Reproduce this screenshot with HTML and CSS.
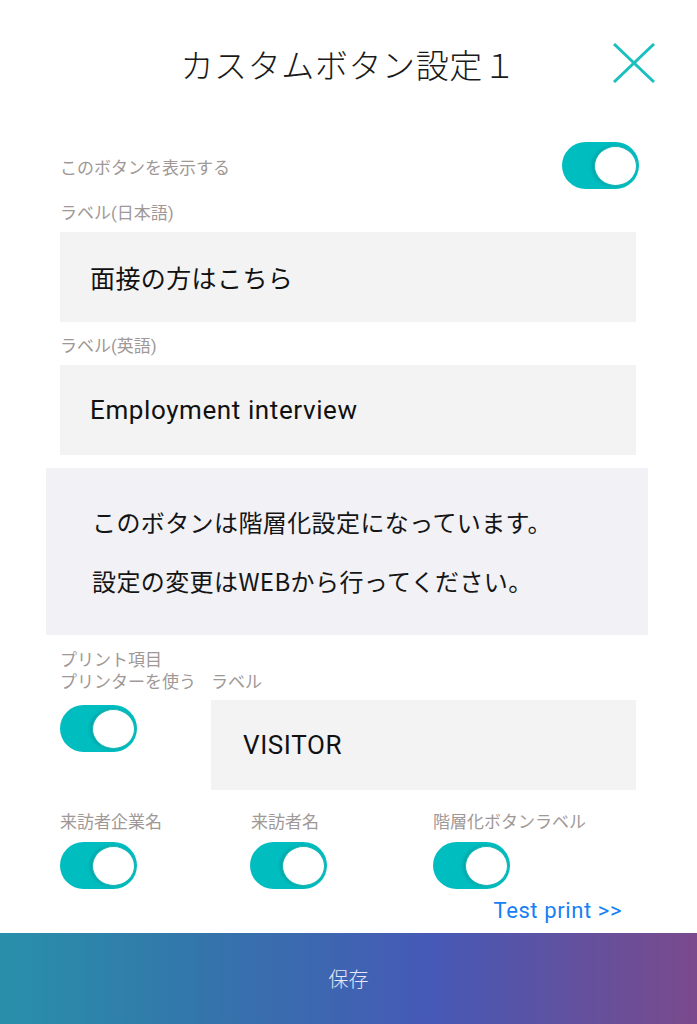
FILE: index.html
```html
<html><head><title>カスタムボタン設定1</title>
<meta charset="utf-8">
<link rel="stylesheet" href="styles.css">
</head>
<body>

<div class="page">
  <header class="top-bar">
    <span></span>
    <h1 class="title">カスタムボタン設定１</h1>
    <button class="close-btn" aria-label="閉じる">
      <svg viewBox="0 0 42 40" width="42" height="40">
        <line x1="1" y1="1" x2="41" y2="39" stroke="#1cbfbe" stroke-width="3"/>
        <line x1="41" y1="1" x2="1" y2="39" stroke="#1cbfbe" stroke-width="3"/>
      </svg>
    </button>
  </header>

  <main class="content">
    <div class="show-row">
      <span class="field-label">このボタンを表示する</span>
      <span class="toggle"><span class="knob"></span></span>
    </div>

    <div class="field-label label-gap">ラベル(日本語)</div>
    <div class="text-box jp-text">面接の方はこちら</div>

    <div class="field-label label-gap">ラベル(英語)</div>
    <div class="text-box">Employment interview</div>

    <div class="notice">
      <p>このボタンは階層化設定になっています。</p>
      <p>設定の変更はWEBから行ってください。</p>
    </div>

    <div class="print-row">
      <div class="print-left">
        <div class="field-label">プリント項目</div>
        <div class="field-label">プリンターを使う</div>
        <span class="toggle print-toggle"><span class="knob"></span></span>
      </div>
      <div class="print-right">
        <div class="field-label">ラベル</div>
        <div class="text-box small-box">VISITOR</div>
      </div>
    </div>

    <div class="item-grid">
      <div class="item">
        <div class="field-label">来訪者企業名</div>
        <span class="toggle"><span class="knob"></span></span>
      </div>
      <div class="item">
        <div class="field-label">来訪者名</div>
        <span class="toggle"><span class="knob"></span></span>
      </div>
      <div class="item">
        <div class="field-label">階層化ボタンラベル</div>
        <span class="toggle"><span class="knob"></span></span>
      </div>
    </div>

    <div class="test-row">
      <a class="test-link" href="#">Test print &gt;&gt;</a>
    </div>
  </main>

  <footer class="save-bar">保存</footer>
</div>

</body></html>
```

FILE: styles.css
```css
:root {
  --teal: #00bdbf;
  --label: #a09896;
  --box: #f3f3f3;
  --notice: #f1f1f6;
  --link: #1680f6;
}

body {
  margin: 0;
  padding: 0;
  background: #fff;
  color: #111;
  font-family: Roboto, "Noto Sans CJK JP", sans-serif;
}

.page {
  display: flex;
  flex-direction: column;
  min-height: 100vh;
}

.top-bar {
  height: 132px;
  display: grid;
  grid-template-columns: 1fr auto 1fr;
  align-items: center;
}

.title {
  margin: -4px 0 0 0;
  font-family: "Noto Sans CJK JP", sans-serif;
  font-size: 33px;
  font-weight: 300;
  color: #1a1a1a;
  letter-spacing: 0.6px;
}

.close-btn {
  justify-self: end;
  margin-right: 42px;
  margin-top: -6px;
  padding: 0;
  border: none;
  background: none;
  display: flex;
}

.content {
  padding: 10px 61px 0 60px;
}

.field-label {
  font-family: Roboto, "Noto Sans CJK JP", sans-serif;
  font-size: 17px;
  line-height: 22px;
  color: var(--label);
}

.label-gap {
  margin-top: 13px;
}

.show-row {
  display: flex;
  justify-content: space-between;
  align-items: center;
  margin-right: -3px;
}

.show-row .field-label {
  margin-top: 5px;
}

.toggle {
  width: 77px;
  height: 47px;
  border-radius: 24px;
  background: var(--teal);
  display: flex;
  justify-content: flex-end;
  align-items: center;
  padding-right: 2px;
  box-sizing: border-box;
}

.knob {
  width: 41px;
  height: 38px;
  border-radius: 50%;
  background: #fff;
  border: 1px solid #19b5b5;
  box-shadow: -2px 0 3px rgba(0, 90, 90, 0.25);
}

.text-box {
  margin-top: 8px;
  height: 90px;
  background: var(--box);
  display: flex;
  align-items: center;
  padding-left: 30px;
  font-size: 26px;
  letter-spacing: 0.6px;
  color: #111;
}

.jp-text {
  font-size: 25px;
  letter-spacing: 0.4px;
}

.notice {
  margin: 13px -12px 0 -14px;
  height: 167px;
  box-sizing: border-box;
  padding: 24px 0 0 46px;
  background: var(--notice);
  font-family: "Noto Sans CJK JP", sans-serif;
  font-size: 24px;
  letter-spacing: 0.4px;
  color: #151515;
}

.notice p {
  margin: 0;
  line-height: 59px;
}

.print-row {
  display: flex;
  margin-top: 14px;
}

.print-left {
  width: 151px;
}

.print-toggle {
  margin-top: 12px;
}

.print-right {
  flex: 1;
  padding-top: 22px;
}

.small-box {
  margin-top: 7px;
  padding-left: 32px;
}

.item-grid {
  display: grid;
  grid-template-columns: 190px 183px 1fr;
  margin-top: 21px;
}

.item .toggle {
  margin-top: 9px;
}

.item:nth-child(2) .field-label {
  padding-left: 1px;
}

.test-row {
  display: flex;
  justify-content: flex-end;
  padding-right: 14px;
  margin-top: 9px;
}

.test-link {
  color: var(--link);
  font-size: 22px;
  line-height: 26px;
  letter-spacing: 0.6px;
  text-decoration: none;
}

.save-bar {
  margin-top: auto;
  height: 91px;
  display: flex;
  align-items: center;
  justify-content: center;
  background: linear-gradient(90deg, #2890aa 0%, #3474ab 30%, #4659b6 62%, #7a4a8c 100%);
  color: #e8e8f4;
  font-family: "Noto Sans CJK JP", sans-serif;
  font-size: 20px;
  font-weight: 300;
}
```
